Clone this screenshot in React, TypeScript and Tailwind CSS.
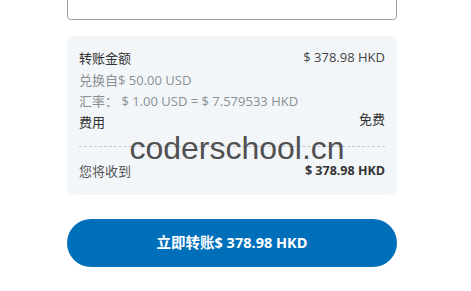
export default function App() {
  return (
    <div className="relative h-[291px] w-[471px] overflow-hidden bg-white font-['Open_Sans','Noto_Sans_CJK_SC',sans-serif]">
      <div className="ml-[67px] w-[330px]">
        <div className="-mt-[20px] h-[40px] rounded-[4px] border border-[#9aa0a6] bg-white" />

        <div className="mt-[16px] rounded-[6px] bg-[#f3f6f9] px-[12px] pt-[11px] pb-[14px] text-[13px] text-[#333]">
          <div className="flex items-start justify-between leading-[22px]">
            <span>转账金额</span>
            <span className="-mt-[1px] text-[#444]">$ 378.98 HKD</span>
          </div>
          <p className="leading-[22px] text-[#8a8f94]">兑换自$ 50.00 USD</p>
          <p className="leading-[20px] text-[#8a8f94]">汇率： $ 1.00 USD = $ 7.579533 HKD</p>
          <div className="flex items-start justify-between leading-[22px]">
            <span>费用</span>
            <span className="-mt-[3px]">免费</span>
          </div>
          <div className="mt-[13px] border-t border-dashed border-[#c4c9ce]" />
          <div className="mt-[14px] flex items-center justify-between leading-[20px]">
            <span className="text-[#555]">您将收到</span>
            <span className="text-[12.5px] font-bold text-[#333]">$ 378.98 HKD</span>
          </div>
        </div>

        <button className="mt-[24px] flex h-[48px] w-full items-center justify-center rounded-full bg-[#006fba] text-[14.5px] font-bold text-white">
          立即转账$ 378.98 HKD
        </button>
      </div>

      <div className="pointer-events-none absolute left-0 top-[130px] w-full pl-[3px] text-center font-['Liberation_Sans',sans-serif] text-[32px] leading-[36px] text-[#505050]">
        coderschool.cn
      </div>
    </div>
  );
}
